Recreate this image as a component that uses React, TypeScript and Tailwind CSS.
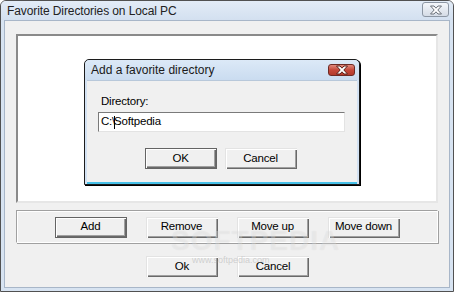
import React from "react"

const ui = { fontFamily: '"Liberation Sans", Arial, sans-serif' }
const title = { fontFamily: '"Liberation Sans", Arial, sans-serif' }

function Btn({ label, primary = false }: { label: string; primary?: boolean }) {
  return (
    <div
      className={
        "w-[72px] h-[21px] flex items-center justify-center bg-[#f0f0f0] text-[11.5px] text-black " +
        (primary
          ? "border border-[#646464] shadow-[inset_1px_1px_#ffffff,inset_-1px_-1px_#696969,inset_-2px_-2px_#a0a0a0]"
          : "shadow-[inset_1px_1px_#e3e3e3,inset_2px_2px_#ffffff,inset_-1px_-1px_#696969,inset_-2px_-2px_#a0a0a0]")
      }
      style={ui}
    >
      <span className="tracking-[-0.2px]">{label}</span>
    </div>
  )
}

function CloseGlyph({ fill, stroke }: { fill: string; stroke: string }) {
  return (
    <svg width="14" height="10" viewBox="0 0 14 10">
      <path
        d="M1.5 1 L5 1 L7 3.2 L9 1 L12.5 1 L8.8 5 L12.5 9 L9 9 L7 6.8 L5 9 L1.5 9 L5.2 5 Z"
        fill={fill}
        stroke={stroke}
        strokeWidth="1"
        strokeLinejoin="round"
      />
    </svg>
  )
}

function AddDialog() {
  return (
    <div className="absolute left-[83px] top-[58px] w-[276px] h-[126px] border border-[#1c1c1c] rounded-t-[5px] bg-[#d3e2f3] flex flex-col shadow-[1px_1px_0_#000]">
      <div className="h-[20px] flex items-center pl-[6px] pr-[4px] bg-gradient-to-b from-[#dce9f7] to-[#cadcf0] rounded-t-[5px]">
        <span className="flex-1 text-[12px] text-[#1a1a1a]" style={title}>
          Add a favorite directory
        </span>
        <div className="w-[27px] h-[12px] mt-[-1px] rounded-[3px] border border-[#6e2a24] bg-gradient-to-b from-[#e08a7e] via-[#c5483a] to-[#b33a2c] flex items-center justify-center">
          <CloseGlyph fill="#ffffff" stroke="#5a1f18" />
        </div>
      </div>
      <div className="flex-1 mx-[2px] bg-[#f0f0f0] border-t border-[#b8c8da] border-b-2 border-b-[#46c0e8] flex flex-col pl-[11px] pr-[12px] pt-[13px]" style={ui}>
        <span className="pl-[3px] text-[11.5px] leading-[14px] text-black tracking-[-0.2px]">Directory:</span>
        <div className="mt-[4px] h-[20px] bg-white border border-[#7a7a7a] border-b-[#e3e3e3] border-r-[#e3e3e3] flex items-center pl-[2px] text-[11.5px] text-black tracking-[-0.2px]">
          C:\<span className="w-px h-[13px] bg-black mx-[-1px]" />Softpedia
        </div>
        <div className="mt-[16px] flex justify-center gap-[8px] pr-[2px]">
          <Btn label="OK" primary />
          <Btn label="Cancel" />
        </div>
      </div>
    </div>
  )
}

export default function App() {
  return (
    <div className="relative w-[454px] h-[292px] bg-[#d7e3f1] border border-[#515151] rounded-t-[6px] flex flex-col overflow-hidden">
      <div className="h-[21px] flex items-center pl-[6px] pr-[4px] bg-gradient-to-b from-[#e3ecf7] to-[#d3e0f0]">
        <span className="flex-1 text-[12px] text-[#222] tracking-[-0.1px]" style={title}>
          Favorite Directories on Local PC
        </span>
        <div className="w-[27px] h-[15px] mt-[-2px] rounded-[3px] border border-[#8c96a3] bg-gradient-to-b from-[#f4f7fb] to-[#d5dce6] flex items-center justify-center">
          <CloseGlyph fill="#ffffff" stroke="#6a7079" />
        </div>
      </div>
      <div className="flex-1 mx-[3px] mb-[3px] bg-[#f0f0f0] border border-[#a8b6c8] flex flex-col px-[11px] pt-[13px] pb-[10px]">
        <div className="h-[169px] bg-white border-2 border-t-[#8a8a8a] border-l-[#8a8a8a] border-b-[#e6e6e6] border-r-[#e6e6e6]" />
        <div className="mt-[7px] h-[33px] border border-[#a0a0a0] border-b-white border-r-white shadow-[inset_1px_1px_#ffffff,1px_1px_#a0a0a0] flex items-center justify-center gap-[19px] pt-px">
          <Btn label="Add" primary />
          <Btn label="Remove" />
          <Btn label="Move up" />
          <Btn label="Move down" />
        </div>
        <div className="mt-[13px] flex justify-center gap-[19px] pl-px">
          <Btn label="Ok" />
          <Btn label="Cancel" />
        </div>
      </div>
      <AddDialog />
      <div
        className="absolute left-[170px] top-[219px] text-[28px] font-bold tracking-[1px] text-white/30 [text-shadow:0_0_1px_rgba(0,0,0,0.08)] pointer-events-none"
        style={ui}
      >
        SOFTPEDIA
      </div>
      <div
        className="absolute left-[191px] top-[253px] text-[9px] text-[#9a9a9a]/40 pointer-events-none"
        style={ui}
      >
        www.softpedia.com
      </div>
    </div>
  )
}
